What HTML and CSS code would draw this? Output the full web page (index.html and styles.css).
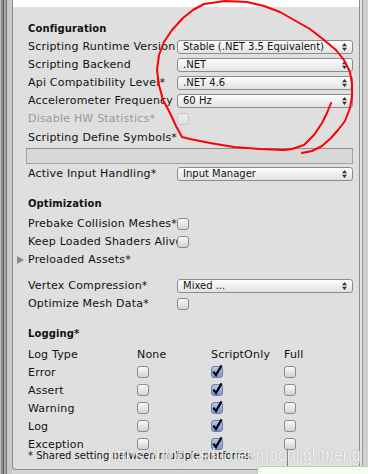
FILE: index.html
```html
<!DOCTYPE html>
<html>
<head>
<meta charset="utf-8">
<link rel="stylesheet" href="styles.css">
</head>
<body>
<div class="screen">
  <div class="lbars"></div>
  <div class="mid">
    <div class="box">
      <div class="whitestrip"></div>
      <div class="content">
        <div class="hdr hdr-first">Configuration</div>
        <div class="row"><div class="lbl">Scripting Runtime Version</div><div class="dd"><span>Stable (.NET 3.5 Equivalent)</span><svg class="arr" width="5" height="8" viewBox="0 0 5 8"><path d="M0 3.2 L2.5 0 L5 3.2 Z M0 4.8 L2.5 8 L5 4.8 Z" fill="#333"/></svg></div></div>
        <div class="row"><div class="lbl">Scripting Backend</div><div class="dd"><span>.NET</span><svg class="arr" width="5" height="8" viewBox="0 0 5 8"><path d="M0 3.2 L2.5 0 L5 3.2 Z M0 4.8 L2.5 8 L5 4.8 Z" fill="#333"/></svg></div></div>
        <div class="row"><div class="lbl">Api Compatibility Level*</div><div class="dd"><span>.NET 4.6</span><svg class="arr" width="5" height="8" viewBox="0 0 5 8"><path d="M0 3.2 L2.5 0 L5 3.2 Z M0 4.8 L2.5 8 L5 4.8 Z" fill="#333"/></svg></div></div>
        <div class="row"><div class="lbl">Accelerometer Frequency</div><div class="dd"><span>60 Hz</span><svg class="arr" width="5" height="8" viewBox="0 0 5 8"><path d="M0 3.2 L2.5 0 L5 3.2 Z M0 4.8 L2.5 8 L5 4.8 Z" fill="#333"/></svg></div></div>
        <div class="row"><div class="lbl disabled">Disable HW Statistics*</div><div class="cb cb-disabled"></div></div>
        <div class="row row-gap1"><div class="lbl lbl-wide">Scripting Define Symbols*</div></div>
        <div class="field"></div>
        <div class="row row-gap1"><div class="lbl">Active Input Handling*</div><div class="dd"><span>Input Manager</span><svg class="arr" width="5" height="8" viewBox="0 0 5 8"><path d="M0 3.2 L2.5 0 L5 3.2 Z M0 4.8 L2.5 8 L5 4.8 Z" fill="#333"/></svg></div></div>

        <div class="hdr hdr-sec">Optimization</div>
        <div class="row row-gap2"><div class="lbl">Prebake Collision Meshes*</div><div class="cb"></div></div>
        <div class="row"><div class="lbl">Keep Loaded Shaders Alive*</div><div class="cb"></div></div>
        <div class="row"><div class="fold"></div><div class="lbl">Preloaded Assets*</div></div>
        <div class="row row-gap8"><div class="lbl">Vertex Compression*</div><div class="dd"><span>Mixed ...</span><svg class="arr" width="5" height="8" viewBox="0 0 5 8"><path d="M0 3.2 L2.5 0 L5 3.2 Z M0 4.8 L2.5 8 L5 4.8 Z" fill="#333"/></svg></div></div>
        <div class="row"><div class="lbl">Optimize Mesh Data*</div><div class="cb"></div></div>

        <div class="hdr hdr-sec">Logging*</div>
        <div class="lt lt-head row-gap2"><div>Log Type</div><div>None</div><div>ScriptOnly</div><div>Full</div></div>
        <div class="lt"><div>Error</div><div class="cb"></div><div class="cb on"><svg width="12" height="12" viewBox="0 0 12 12"><path d="M2.3 5.6 L5 9 L10.6 -0.6" fill="none" stroke="#000" stroke-width="2.2"/></svg></div><div class="cb"></div></div>
        <div class="lt"><div>Assert</div><div class="cb"></div><div class="cb on"><svg width="12" height="12" viewBox="0 0 12 12"><path d="M2.3 5.6 L5 9 L10.6 -0.6" fill="none" stroke="#000" stroke-width="2.2"/></svg></div><div class="cb"></div></div>
        <div class="lt"><div>Warning</div><div class="cb"></div><div class="cb on"><svg width="12" height="12" viewBox="0 0 12 12"><path d="M2.3 5.6 L5 9 L10.6 -0.6" fill="none" stroke="#000" stroke-width="2.2"/></svg></div><div class="cb"></div></div>
        <div class="lt"><div>Log</div><div class="cb"></div><div class="cb on"><svg width="12" height="12" viewBox="0 0 12 12"><path d="M2.3 5.6 L5 9 L10.6 -0.6" fill="none" stroke="#000" stroke-width="2.2"/></svg></div><div class="cb"></div></div>
        <div class="lt"><div>Exception</div><div class="cb"></div><div class="cb on"><svg width="12" height="12" viewBox="0 0 12 12"><path d="M2.3 5.6 L5 9 L10.6 -0.6" fill="none" stroke="#000" stroke-width="2.2"/></svg></div><div class="cb"></div></div>
        <div class="note">* Shared setting between multiple platforms.</div>
      </div>
    </div>
  </div>
  <div class="rbars"></div>

  <div class="pointer"></div>
  <div class="tip"></div>
  <div class="watermark">https://blog.csdn.net/moonlightpeng</div>
  <svg class="ink" width="368" height="474" viewBox="0 0 368 474">
    <polyline fill="none" stroke="#ff0000" stroke-width="2" stroke-linejoin="round" stroke-linecap="round"
      points="331,103 327,113 322,123 314,135 304,145 292,149 284,150 260,149 234,147 210,143 190,139 182,137 176,126 170,113 163,100 159,85 157,70 159,55 164,42 172,30 183,18 193,10 204,4 225,1 247,2 264,6 280,12 294,20 310,29 324,40 336,50 344,60 350,72 352,84 352,96 350,108 345,121 338,130 331,138 322,146 312,151 302,153"/>
  </svg>
</div>
</body>
</html>
```

FILE: styles.css
```css
html, body {
  margin: 0;
  padding: 0;
}
body {
  width: 368px;
  height: 474px;
  overflow: hidden;
  background: #d6d6d6;
  font-family: "DejaVu Sans", "Noto Sans", sans-serif;
  color: #111;
}
.screen {
  position: relative;
  width: 368px;
  height: 474px;
  display: flex;
  overflow: hidden;
}
.lbars {
  width: 12px;
  flex: none;
  background: linear-gradient(to right,
    #bdbdbd 0, #bdbdbd 1px,
    #8e8e8e 1px, #8e8e8e 3px,
    #5f5f5f 3px, #5f5f5f 4px,
    #a6a6a6 4px, #a6a6a6 6px,
    #727272 6px, #727272 7px,
    #c9c9c9 7px, #c9c9c9 12px);
}
.rbars {
  width: 8px;
  flex: none;
  background: linear-gradient(to right,
    #e4e4e4 0, #e4e4e4 2px,
    #9a9a9a 2px, #9a9a9a 3px,
    #d0d0d0 3px, #d0d0d0 8px);
}
.mid {
  width: 348px;
  flex: none;
  display: flex;
  flex-direction: column;
  background: #d4d4d4;
}
.box {
  height: 470px;
  box-sizing: border-box;
  border: 1px solid #8e8e8e;
  border-top: none;
  border-radius: 0 0 4px 4px;
  background: #dfdfdf;
  display: flex;
  flex-direction: column;
}
.whitestrip {
  height: 7px;
  background: #ffffff;
  flex: none;
}
.content {
  padding: 12px 6px 0 15px;
  display: flex;
  flex-direction: column;
}
.hdr {
  height: 19px;
  line-height: 19px;
  font-size: 10px;
  font-weight: bold;
  letter-spacing: 0.1px;
  color: #111;
}
.hdr-sec {
  margin-top: 12px;
  height: 18px;
  line-height: 18px;
}
.row {
  display: flex;
  align-items: center;
  height: 18px;
  flex: none;
}
.row-gap1 { margin-top: 1px; }
.row-gap2 { margin-top: 2px; }
.row-gap8 { margin-top: 8px; }
.lbl {
  width: 149px;
  flex: none;
  overflow: hidden;
  white-space: nowrap;
  font-size: 11px;
  letter-spacing: 0.2px;
  line-height: 18px;
}
.lbl-wide {
  width: 200px;
}
.disabled {
  color: #9a9a9a;
}
.dd {
  flex: 1;
  height: 14px;
  box-sizing: border-box;
  border: 1px solid #8c8c8c;
  border-radius: 3px;
  background: linear-gradient(#fdfdfd, #e2e2e2);
  font-size: 10px;
  line-height: 12px;
  padding: 0 5px 0 5px;
  display: flex;
  align-items: center;
  justify-content: space-between;
  white-space: nowrap;
  color: #111;
}
.arr {
  flex: none;
}
.cb {
  width: 12px;
  height: 12px;
  box-sizing: border-box;
  border: 1px solid #8a8a8a;
  border-radius: 3px;
  background: linear-gradient(#fbfbfb, #d2d2d2);
  flex: none;
  position: relative;
}
.cb svg {
  position: absolute;
  left: -1px;
  top: -1px;
  overflow: visible;
}
.cb.on {
  background: linear-gradient(#b4c8ec, #7b98cf);
  border-color: #6d7fa3;
}
.cb-disabled {
  border-color: #c6c6c6;
  background: linear-gradient(#ececec, #e0e0e0);
}
.field {
  margin: 1px 0 0 -2px;
  height: 16px;
  box-sizing: border-box;
  border: 1px solid #a2a2a2;
  border-top-color: #8e8e8e;
  background: #d8d8d8;
  flex: none;
}
.fold {
  width: 0;
  height: 0;
  margin-left: -11px;
  margin-right: 4px;
  border-top: 4.5px solid transparent;
  border-bottom: 4.5px solid transparent;
  border-left: 7px solid #8a8a8a;
}
.lt {
  display: grid;
  grid-template-columns: 109px 74px 73px 1fr;
  align-items: center;
  height: 18px;
  font-size: 11px;
  letter-spacing: 0.2px;
  flex: none;
}
.note {
  height: 13px;
  line-height: 13px;
  margin-top: -4px;
  font-size: 10px;
  white-space: nowrap;
}
.pointer {
  position: absolute;
  left: 287px;
  top: 449px;
  width: 1px;
  height: 25px;
  background: #7a7a7a;
}
.tip {
  position: absolute;
  left: 257px;
  top: 466px;
  width: 130px;
  height: 20px;
  box-sizing: border-box;
  border: 1px solid #b4da92;
  border-radius: 5px;
  background: #f7fcf1;
}
.watermark {
  position: absolute;
  left: 108px;
  top: 448px;
  font-family: "Liberation Sans", Arial, sans-serif;
  font-size: 16px;
  line-height: 18px;
  white-space: nowrap;
  color: rgba(255, 255, 255, 0.88);
  text-shadow: 0 0 1px rgba(0, 0, 0, 0.35);
  transform: scaleY(1.15);
  transform-origin: left bottom;
}
.ink {
  position: absolute;
  left: 0;
  top: 0;
  pointer-events: none;
}
```
